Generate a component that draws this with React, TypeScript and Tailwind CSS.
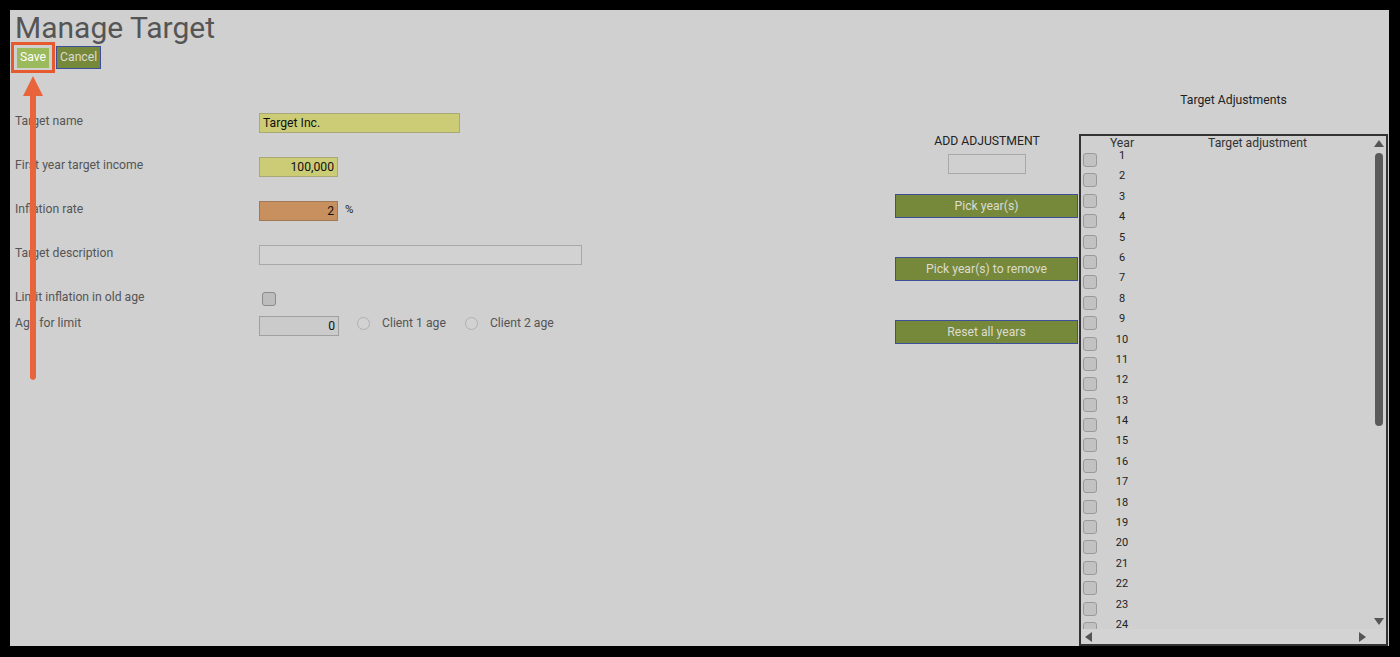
import React from 'react';

const years = Array.from({ length: 24 }, (_, i) => i + 1);

function Field({ label, children, top }: { label: string; children: React.ReactNode; top: string }) {
  return (
    <div className={`flex items-start ${top}`}>
      <div className="w-[244px] text-[12.2px] leading-[16px] text-[#555]">{label}</div>
      {children}
    </div>
  );
}

function OliveButton({ label }: { label: string }) {
  return (
    <button className="w-[183px] h-[24px] bg-[#76883a] border border-[#3d4f9a] text-[12.2px] text-[#dcdcd0] leading-none">
      {label}
    </button>
  );
}

function Radio({ label }: { label: string }) {
  return (
    <div className="flex items-center gap-[12px]">
      <span className="w-[13px] h-[13px] rounded-full border border-[#b0b0b0] bg-[#d2d2d2]" />
      <span className="text-[12.2px] leading-[16px] text-[#555]">{label}</span>
    </div>
  );
}

function AdjustmentsTable() {
  return (
    <div className="w-[309px] h-[512px] border-2 border-[#333] flex flex-col bg-[#d0d0d0]">
      <div className="flex flex-1 min-h-0">
        <div className="flex-1 flex flex-col overflow-hidden">
          <div className="flex h-[14px] text-[12.2px] leading-[14px] text-[#333] shrink-0">
            <div className="w-[20px]" />
            <div className="w-[42px] text-center">Year</div>
            <div className="flex-1 text-center">Target adjustment</div>
          </div>
          <div className="flex-1 overflow-hidden">
            {years.map((y) => (
              <div key={y} className="flex h-[20.4px]">
                <div className="w-[20px] pl-[2px] pt-[3px]">
                  <div className="w-[14px] h-[14px] rounded-[3px] border border-[#9a9a9a] bg-[#c2c2c2]" />
                </div>
                <div className="w-[42px] text-center text-[11px] leading-[12px] text-[#222]">{y}</div>
              </div>
            ))}
          </div>
        </div>
        {/* vertical scrollbar */}
        <div className="w-[14px] flex flex-col items-center pt-[4px] pb-[4px]">
          <svg width="10" height="7" viewBox="0 0 10 7"><path d="M5 0 L10 7 L0 7 Z" fill="#555" /></svg>
          <div className="w-[8px] h-[273px] mt-[6px] rounded-full bg-[#5a5a5a]" />
          <div className="flex-1" />
          <svg width="10" height="7" viewBox="0 0 10 7"><path d="M0 0 L10 0 L5 7 Z" fill="#555" /></svg>
        </div>
      </div>
      {/* horizontal scrollbar */}
      <div className="h-[15px] flex items-center justify-between pl-[4px] pr-[20px] bg-[#d3d3d3] shrink-0">
        <svg width="7" height="10" viewBox="0 0 7 10"><path d="M7 0 L7 10 L0 5 Z" fill="#555" /></svg>
        <svg width="7" height="10" viewBox="0 0 7 10"><path d="M0 0 L7 5 L0 10 Z" fill="#555" /></svg>
      </div>
    </div>
  );
}

export default function App() {
  return (
    <div className="w-[1400px] h-[657px] bg-black pt-[10px] pl-[10px] pr-[11px] pb-[11px] font-['Roboto',sans-serif]">
      <div className="relative w-full h-full bg-[#d0d0d0] overflow-hidden">
        {/* Header */}
        <div className="pl-[5px]">
          <h1 className="text-[30px] leading-[36px] text-[#555]">Manage Target</h1>
          <div className="flex items-center gap-[7px] h-[23px] pl-[2px]">
            <button className="h-[20px] px-[3px] bg-[#9bba5b] text-white text-[12.2px] leading-none">Save</button>
            <button className="h-[23px] px-[3px] bg-[#76883a] border border-[#3d4f9a] text-[#dcdcd0] text-[12.2px] leading-none">
              Cancel
            </button>
          </div>
        </div>

        <div className="flex">
          {/* Form */}
          <div className="flex-1 pl-[5px] pt-[44px] flex flex-col">
            <Field label="Target name" top="">
              <div className="w-[201px] h-[20px] bg-[#cccc77] border border-[#a8a878] px-[3px] text-[12.2px] leading-[18px] text-[#111]">
                Target Inc.
              </div>
            </Field>
            <Field label="First year target income" top="mt-[24px]">
              <div className="w-[79px] h-[20px] bg-[#cccc77] border border-[#a8a878] px-[3px] text-[12.2px] leading-[18px] text-[#111] text-right">
                100,000
              </div>
            </Field>
            <Field label="Inflation rate" top="mt-[24px]">
              <div className="flex items-start gap-[7px]">
                <div className="w-[79px] h-[20px] bg-[#c8905e] border border-[#a07a58] px-[3px] text-[12.2px] leading-[18px] text-[#111] text-right">
                  2
                </div>
                <span className="text-[11.5px] leading-[16px] text-[#222]">%</span>
              </div>
            </Field>
            <Field label="Target description" top="mt-[24px]">
              <div className="w-[323px] h-[20px] border border-[#a8a8a8] bg-[#d2d2d2]" />
            </Field>
            <Field label="Limit inflation in old age" top="mt-[24px]">
              <div className="ml-[3px] mt-[3px] w-[14px] h-[14px] rounded-[3px] border border-[#8a8a8a] bg-[#bdbdbd]" />
            </Field>
            <Field label="Age for limit" top="mt-[9px]">
              <div className="flex items-start mt-[1px] gap-[18px]">
                <div className="w-[80px] h-[20px] bg-[#cbcbcb] border border-[#a0a0a0] px-[3px] text-[12.2px] leading-[18px] text-[#111] text-right">
                  0
                </div>
                <div className="mt-[-1px]">
                  <Radio label="Client 1 age" />
                </div>
                <div className="mt-[-1px] ml-[1px]">
                  <Radio label="Client 2 age" />
                </div>
              </div>
            </Field>
          </div>

          {/* Add adjustment */}
          <div className="w-[184px] pt-[64px] flex flex-col items-center">
            <div className="text-[12.2px] leading-[16px] text-[#222]">ADD ADJUSTMENT</div>
            <div className="w-[78px] h-[20px] mt-[5px] border border-[#a8a8a8]" />
            <div className="mt-[20px] self-start flex flex-col gap-[39px]">
              <OliveButton label="Pick year(s)" />
              <OliveButton label="Pick year(s) to remove" />
              <OliveButton label="Reset all years" />
            </div>
          </div>

          {/* Table */}
          <div className="w-[309px] mr-[1px] pt-[23px] flex flex-col items-center">
            <div className="text-[12.2px] leading-[16px] text-[#222]">Target Adjustments</div>
            <div className="mt-[26px]">
              <AdjustmentsTable />
            </div>
          </div>
        </div>

        {/* Callout highlight over the Save button */}
        <div className="absolute left-[1px] top-[32px] w-[44px] h-[31px] border-[3px] border-[#e55a2e]" />
        <svg className="absolute left-[11px] top-[66px]" width="24" height="306" viewBox="0 0 24 306">
          <path d="M12 0 L22 20 L15 20 L15 302 Q12 306 9 302 L9 20 L2 20 Z" fill="#e8643a" />
        </svg>
      </div>
    </div>
  );
}
